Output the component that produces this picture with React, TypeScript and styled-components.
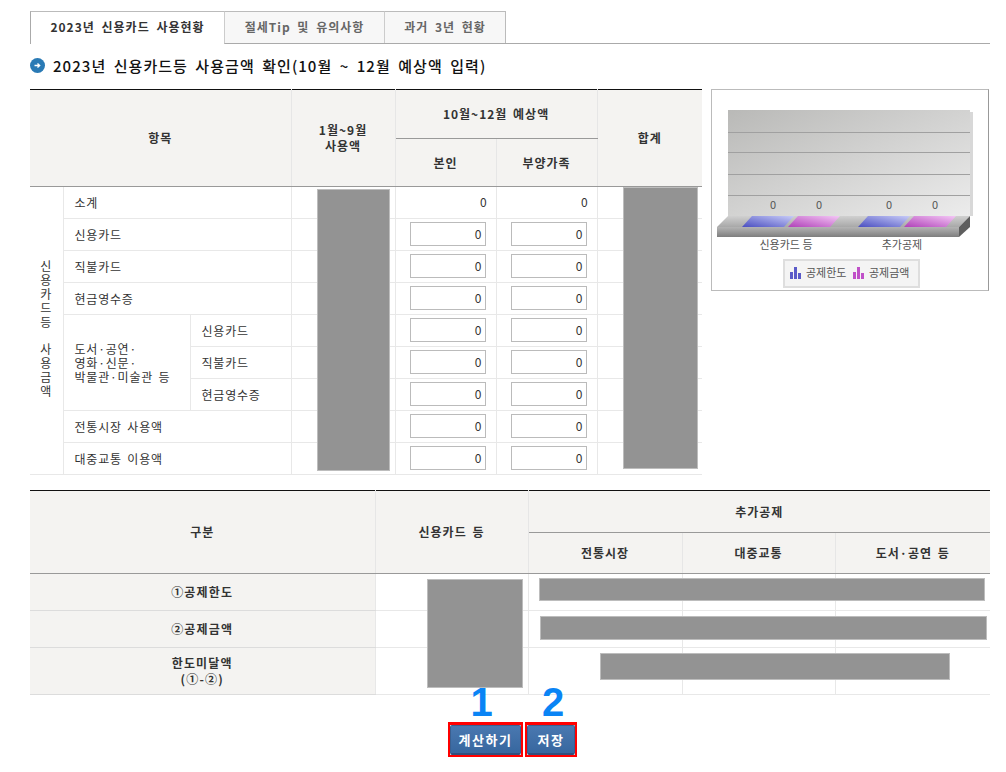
import * as React from 'react'
import styled, { createGlobalStyle } from 'styled-components'

const GlobalStyle = createGlobalStyle`
    html, body {
        margin: 0;
        padding: 0;
        background: #fff;
    }
    body {
        font-family: "Noto Sans CJK KR", "Liberation Sans", sans-serif;
        font-size: 12px;
        color: #333;
    }
`

const Page = styled.div`
    width: 960px;
    padding: 11px 16px 0 30px;
`

const Tabs = styled.ul`
    display: flex;
    height: 32px;
    margin: 0;
    padding: 0;
    list-style: none;
    border-bottom: 1px solid #aaa;
`

const Tab = styled.li<{ $active?: boolean; $width: number }>`
    box-sizing: border-box;
    width: ${props => props.$width}px;
    height: ${props => (props.$active ? 33 : 32)}px;
    margin-right: -1px;
    border: 1px solid #bbb;
    border-bottom: ${props => (props.$active ? 'none' : '0')};
    border-left-color: ${props => (props.$active ? '#aaa' : '#ccc')};
    background: ${props => (props.$active ? '#fff' : '#f7f7f7')};
    color: ${props => (props.$active ? '#333' : '#666')};
    font-weight: bold;
    font-size: 12px;
    letter-spacing: 1px;
    word-spacing: 3px;
    line-height: 30px;
    text-align: center;
`

const Title = styled.h2`
    display: flex;
    align-items: center;
    gap: 8px;
    height: 22px;
    margin: 10px 0 13px;
    font-size: 15px;
    font-weight: 500;
    color: #111;
    letter-spacing: 1.05px;
    word-spacing: 3px;
`

const TopRow = styled.div`
    display: flex;
    align-items: flex-start;
    gap: 9px;
`

const TableWrap = styled.div<{ $width: number }>`
    position: relative;
    width: ${props => props.$width}px;
    flex: none;
`

const Table = styled.table`
    width: 100%;
    table-layout: fixed;
    border-collapse: collapse;
    border-top: 1px solid #111;
`

const HeadCell = styled.th<{ $height?: number }>`
    height: ${props => (props.$height ? `${props.$height}px` : 'auto')};
    padding: 0;
    background: #f4f3f1;
    border: 1px solid #e6e6e6;
    border-top: 0;
    border-bottom: 1px solid #999;
    font-size: 12px;
    font-weight: bold;
    line-height: 16px;
    letter-spacing: 1px;
    word-spacing: 2px;
    text-align: center;
    color: #333;

    &:first-child { border-left: 0; }
    &:last-child { border-right: 0; }
`

const Cell = styled.td`
    height: 31px;
    padding: 0 0 0 11px;
    border: 1px solid #e8e8e8;
    font-size: 12px;
    line-height: 14px;
    color: #333;
    letter-spacing: 0.8px;
    word-spacing: 2px;

    &:first-child { border-left: 0; }
    &:last-child { border-right: 0; }
`

const SideCell = styled(Cell)`
    padding: 0 2px 0 0;
    text-align: center;
`

const VerticalLabel = styled.span`
    display: inline-block;
    writing-mode: vertical-rl;
    text-orientation: upright;
    letter-spacing: 2.2px;
    word-spacing: -2px;
    line-height: 14px;
`

const AmountCell = styled(Cell)`
    height: 30px;
    padding: 0 8px 1px 0;
    text-align: right;
`

const InputCell = styled(Cell)`
    padding: 0 0 0 14px;
`

const AmountInput = styled.input`
    display: block;
    box-sizing: border-box;
    width: 76px;
    height: 24px;
    margin-top: -1px;
    padding: 0 3px 1px 0;
    border: 1px solid #bbb;
    background: #fff;
    font: 12px "Noto Sans CJK KR", "Liberation Sans", sans-serif;
    color: #333;
    text-align: right;
    outline: none;
`

const LabelCell = styled.td<{ $height: number }>`
    height: ${props => props.$height}px;
    padding: 0;
    background: #f4f3f1;
    border: 1px solid #dcdcdc;
    border-left: 0;
    border-right: 1px solid #e8e8e8;
    font-size: 12px;
    font-weight: bold;
    line-height: 16px;
    letter-spacing: 1.2px;
    text-align: center;
    color: #333;
`

const ValueCell = styled.td`
    padding: 0;
    border: 1px solid #e8e8e8;

    &:last-child { border-right: 0; }
`

const Redact = styled.div<{ $x: number; $y: number; $w: number; $h: number }>`
    position: absolute;
    left: ${props => props.$x}px;
    top: ${props => props.$y}px;
    width: ${props => props.$w}px;
    height: ${props => props.$h}px;
    box-sizing: border-box;
    background: #939393;
    border: 1px solid #bdbdbd;
`

const ChartBox = styled.div`
    box-sizing: border-box;
    width: 278px;
    height: 202px;
    border: 1px solid #bbb;
    border-right-color: #999;
    background: #fff;

    svg { display: block; }
    text { font-family: "Noto Sans CJK KR", "Liberation Sans", sans-serif; }
`

const LowerSection = styled.div`
    margin-top: 15px;
`

const Actions = styled.div`
    display: flex;
    justify-content: center;
    gap: 2px;
    margin: 27px 0 0 5px;
`

const Marked = styled.div`
    position: relative;
    border-style: solid;
    border-color: #f00;
    border-width: 3px 2px 2px;
`

const Number = styled.span<{ $shift: number }>`
    position: absolute;
    top: -45px;
    left: ${props => props.$shift}px;
    right: ${props => -props.$shift}px;
    font-family: "Liberation Sans", sans-serif;
    font-size: 40px;
    font-weight: bold;
    line-height: 44px;
    color: #0a84f5;
    text-align: center;
`

const ActionButton = styled.button<{ $width: number }>`
    display: block;
    width: ${props => props.$width}px;
    height: 30px;
    padding: 0;
    border: 1px solid #3a5f90;
    border-bottom: 2px solid #2f4f7d;
    border-radius: 2px;
    background: linear-gradient(#4a78b0, #37679f);
    color: #fff;
    font: bold 13px "Noto Sans CJK KR", "Liberation Sans", sans-serif;
    letter-spacing: 1.5px;
`

const ArrowIcon = () => (
    <svg width="15" height="15" viewBox="0 0 15 15">
        <circle cx="7.5" cy="7.5" r="7.5" fill="#2a7ab5" />
        <path d="M4.5 7.5h5M7.5 5.5l2.2 2-2.2 2" fill="none" stroke="#fff" strokeWidth="1.3" />
    </svg>
)

const LegendIcon = ({ x, color }: { x: number; color: string }) => (
    <g fill={color}>
        <rect x={x} y={182} width={3} height={7} />
        <rect x={x + 4} y={177} width={3} height={12} />
        <rect x={x + 8} y={183} width={3} height={6} />
    </g>
)

const barTops = [
    { x: 30, fill: 'url(#blueBar)' },
    { x: 76, fill: 'url(#pinkBar)' },
    { x: 146, fill: 'url(#blueBar)' },
    { x: 192, fill: 'url(#pinkBar)' },
]

const Chart = () => (
    <ChartBox>
        <svg width="276" height="200" viewBox="0 0 276 200">
            <defs>
                <linearGradient id="wall" x1="0" y1="0" x2="1" y2="1">
                    <stop offset="0" stopColor="#b9b9b7" />
                    <stop offset="1" stopColor="#ececec" />
                </linearGradient>
                <linearGradient id="floorTop" x1="0" y1="0" x2="0" y2="1">
                    <stop offset="0" stopColor="#d0d0d0" />
                    <stop offset="1" stopColor="#a8a8a8" />
                </linearGradient>
                <linearGradient id="floorFront" x1="0" y1="0" x2="0" y2="1">
                    <stop offset="0" stopColor="#b4b4b4" />
                    <stop offset="1" stopColor="#7e7e7e" />
                </linearGradient>
                <linearGradient id="blueBar" x1="0" y1="1" x2="1" y2="0">
                    <stop offset="0" stopColor="#4a4ec0" />
                    <stop offset="1" stopColor="#c8ccf8" />
                </linearGradient>
                <linearGradient id="pinkBar" x1="0" y1="1" x2="1" y2="0">
                    <stop offset="0" stopColor="#b040b8" />
                    <stop offset="1" stopColor="#f4c8f6" />
                </linearGradient>
            </defs>
            <rect x="258" y="22" width="3" height="104" fill="#d8d8d8" />
            <rect x="16" y="20" width="242" height="106" fill="url(#wall)" />
            {[42, 62, 84, 105].map(y => (
                <line key={y} x1="16" x2="258" y1={y + 0.5} y2={y + 0.5} stroke="#a0a0a0" />
            ))}
            <polygon points="5,137 16,126 258,126 247,137" fill="url(#floorTop)" />
            <rect x="5" y="137" width="242" height="10" fill="url(#floorFront)" />
            <polygon points="247,137 258,126 258,137 247,147" fill="#5e5e5e" />
            {barTops.map(bar => (
                <polygon
                    key={bar.x}
                    points={`${bar.x},137 ${bar.x + 10},126 ${bar.x + 52},126 ${bar.x + 42},137`}
                    fill={bar.fill}
                />
            ))}
            <g fontSize="11" fill="#555" textAnchor="middle">
                <text x="61" y="119">0</text>
                <text x="107" y="119">0</text>
                <text x="177" y="119">0</text>
                <text x="223" y="119">0</text>
                <text x="74" y="159">신용카드 등</text>
                <text x="190" y="159">추가공제</text>
            </g>
            <rect x="72" y="170" width="135" height="27" fill="#f4f4f4" stroke="#dedede" strokeWidth="2" />
            <LegendIcon x={78} color="#5a5ac8" />
            <LegendIcon x={141} color="#c050c8" />
            <g fontSize="11" fill="#555">
                <text x="94" y="187">공제한도</text>
                <text x="157" y="187">공제금액</text>
            </g>
        </svg>
    </ChartBox>
)

const amountRows = ['신용카드', '직불카드', '현금영수증']

const bookRows = ['신용카드', '직불카드', '현금영수증']

const InputPair = () => (
    <>
        <Cell />
        <InputCell><AmountInput readOnly value="0" /></InputCell>
        <InputCell><AmountInput readOnly value="0" /></InputCell>
        <Cell />
    </>
)

export default function App() {
    return (
        <Page>
            <GlobalStyle />
            <Tabs>
                <Tab $active $width={195}>2023년 신용카드 사용현황</Tab>
                <Tab $width={161}>절세Tip 및 유의사항</Tab>
                <Tab $width={122}>과거 3년 현황</Tab>
            </Tabs>
            <Title>
                <ArrowIcon />
                2023년 신용카드등 사용금액 확인(10월 ~ 12월 예상액 입력)
            </Title>
            <TopRow>
                <TableWrap $width={672}>
                    <Table>
                        <colgroup>
                            <col width="33" />
                            <col width="127" />
                            <col width="101" />
                            <col width="104" />
                            <col width="101" />
                            <col width="101" />
                            <col width="105" />
                        </colgroup>
                        <thead>
                            <tr>
                                <HeadCell colSpan={3} rowSpan={2}>항목</HeadCell>
                                <HeadCell rowSpan={2}>1월~9월<br />사용액</HeadCell>
                                <HeadCell colSpan={2} $height={48}>10월~12월 예상액</HeadCell>
                                <HeadCell rowSpan={2}>합계</HeadCell>
                            </tr>
                            <tr>
                                <HeadCell $height={47}>본인</HeadCell>
                                <HeadCell $height={47}>부양가족</HeadCell>
                            </tr>
                        </thead>
                        <tbody>
                            <tr>
                                <SideCell rowSpan={9}>
                                    <VerticalLabel>신용카드등 사용금액</VerticalLabel>
                                </SideCell>
                                <Cell colSpan={2}>소계</Cell>
                                <Cell />
                                <AmountCell>0</AmountCell>
                                <AmountCell>0</AmountCell>
                                <Cell />
                            </tr>
                            {amountRows.map(label => (
                                <tr key={label}>
                                    <Cell colSpan={2}>{label}</Cell>
                                    <InputPair />
                                </tr>
                            ))}
                            {bookRows.map((label, i) => (
                                <tr key={label}>
                                    {i === 0 && (
                                        <Cell rowSpan={3}>도서·공연·<br />영화·신문·<br />박물관·미술관 등</Cell>
                                    )}
                                    <Cell>{label}</Cell>
                                    <InputPair />
                                </tr>
                            ))}
                            <tr>
                                <Cell colSpan={2}>전통시장 사용액</Cell>
                                <InputPair />
                            </tr>
                            <tr>
                                <Cell colSpan={2}>대중교통 이용액</Cell>
                                <InputPair />
                            </tr>
                        </tbody>
                    </Table>
                    <Redact $x={287} $y={100} $w={73} $h={282} />
                    <Redact $x={593} $y={98} $w={75} $h={282} />
                </TableWrap>
                <Chart />
            </TopRow>
            <LowerSection>
                <TableWrap $width={960}>
                    <Table>
                        <colgroup>
                            <col width="345" />
                            <col width="153" />
                            <col width="154" />
                            <col width="153" />
                            <col width="155" />
                        </colgroup>
                        <thead>
                            <tr>
                                <HeadCell rowSpan={2}>구분</HeadCell>
                                <HeadCell rowSpan={2}>신용카드 등</HeadCell>
                                <HeadCell colSpan={3} $height={41}>추가공제</HeadCell>
                            </tr>
                            <tr>
                                <HeadCell $height={40}>전통시장</HeadCell>
                                <HeadCell $height={40}>대중교통</HeadCell>
                                <HeadCell $height={40}>도서·공연 등</HeadCell>
                            </tr>
                        </thead>
                        <tbody>
                            <tr>
                                <LabelCell $height={36}>①공제한도</LabelCell>
                                <ValueCell /><ValueCell /><ValueCell /><ValueCell />
                            </tr>
                            <tr>
                                <LabelCell $height={36}>②공제금액</LabelCell>
                                <ValueCell /><ValueCell /><ValueCell /><ValueCell />
                            </tr>
                            <tr>
                                <LabelCell $height={46}>한도미달액<br />(①-②)</LabelCell>
                                <ValueCell /><ValueCell /><ValueCell /><ValueCell />
                            </tr>
                        </tbody>
                    </Table>
                    <Redact $x={397} $y={89} $w={96} $h={109} />
                    <Redact $x={509} $y={88} $w={446} $h={23} />
                    <Redact $x={510} $y={126} $w={447} $h={24} />
                    <Redact $x={570} $y={163} $w={350} $h={27} />
                </TableWrap>
            </LowerSection>
            <Actions>
                <Marked>
                    <Number $shift={-4}>1</Number>
                    <ActionButton $width={71}>계산하기</ActionButton>
                </Marked>
                <Marked>
                    <Number $shift={2}>2</Number>
                    <ActionButton $width={48}>저장</ActionButton>
                </Marked>
            </Actions>
        </Page>
    )
}
